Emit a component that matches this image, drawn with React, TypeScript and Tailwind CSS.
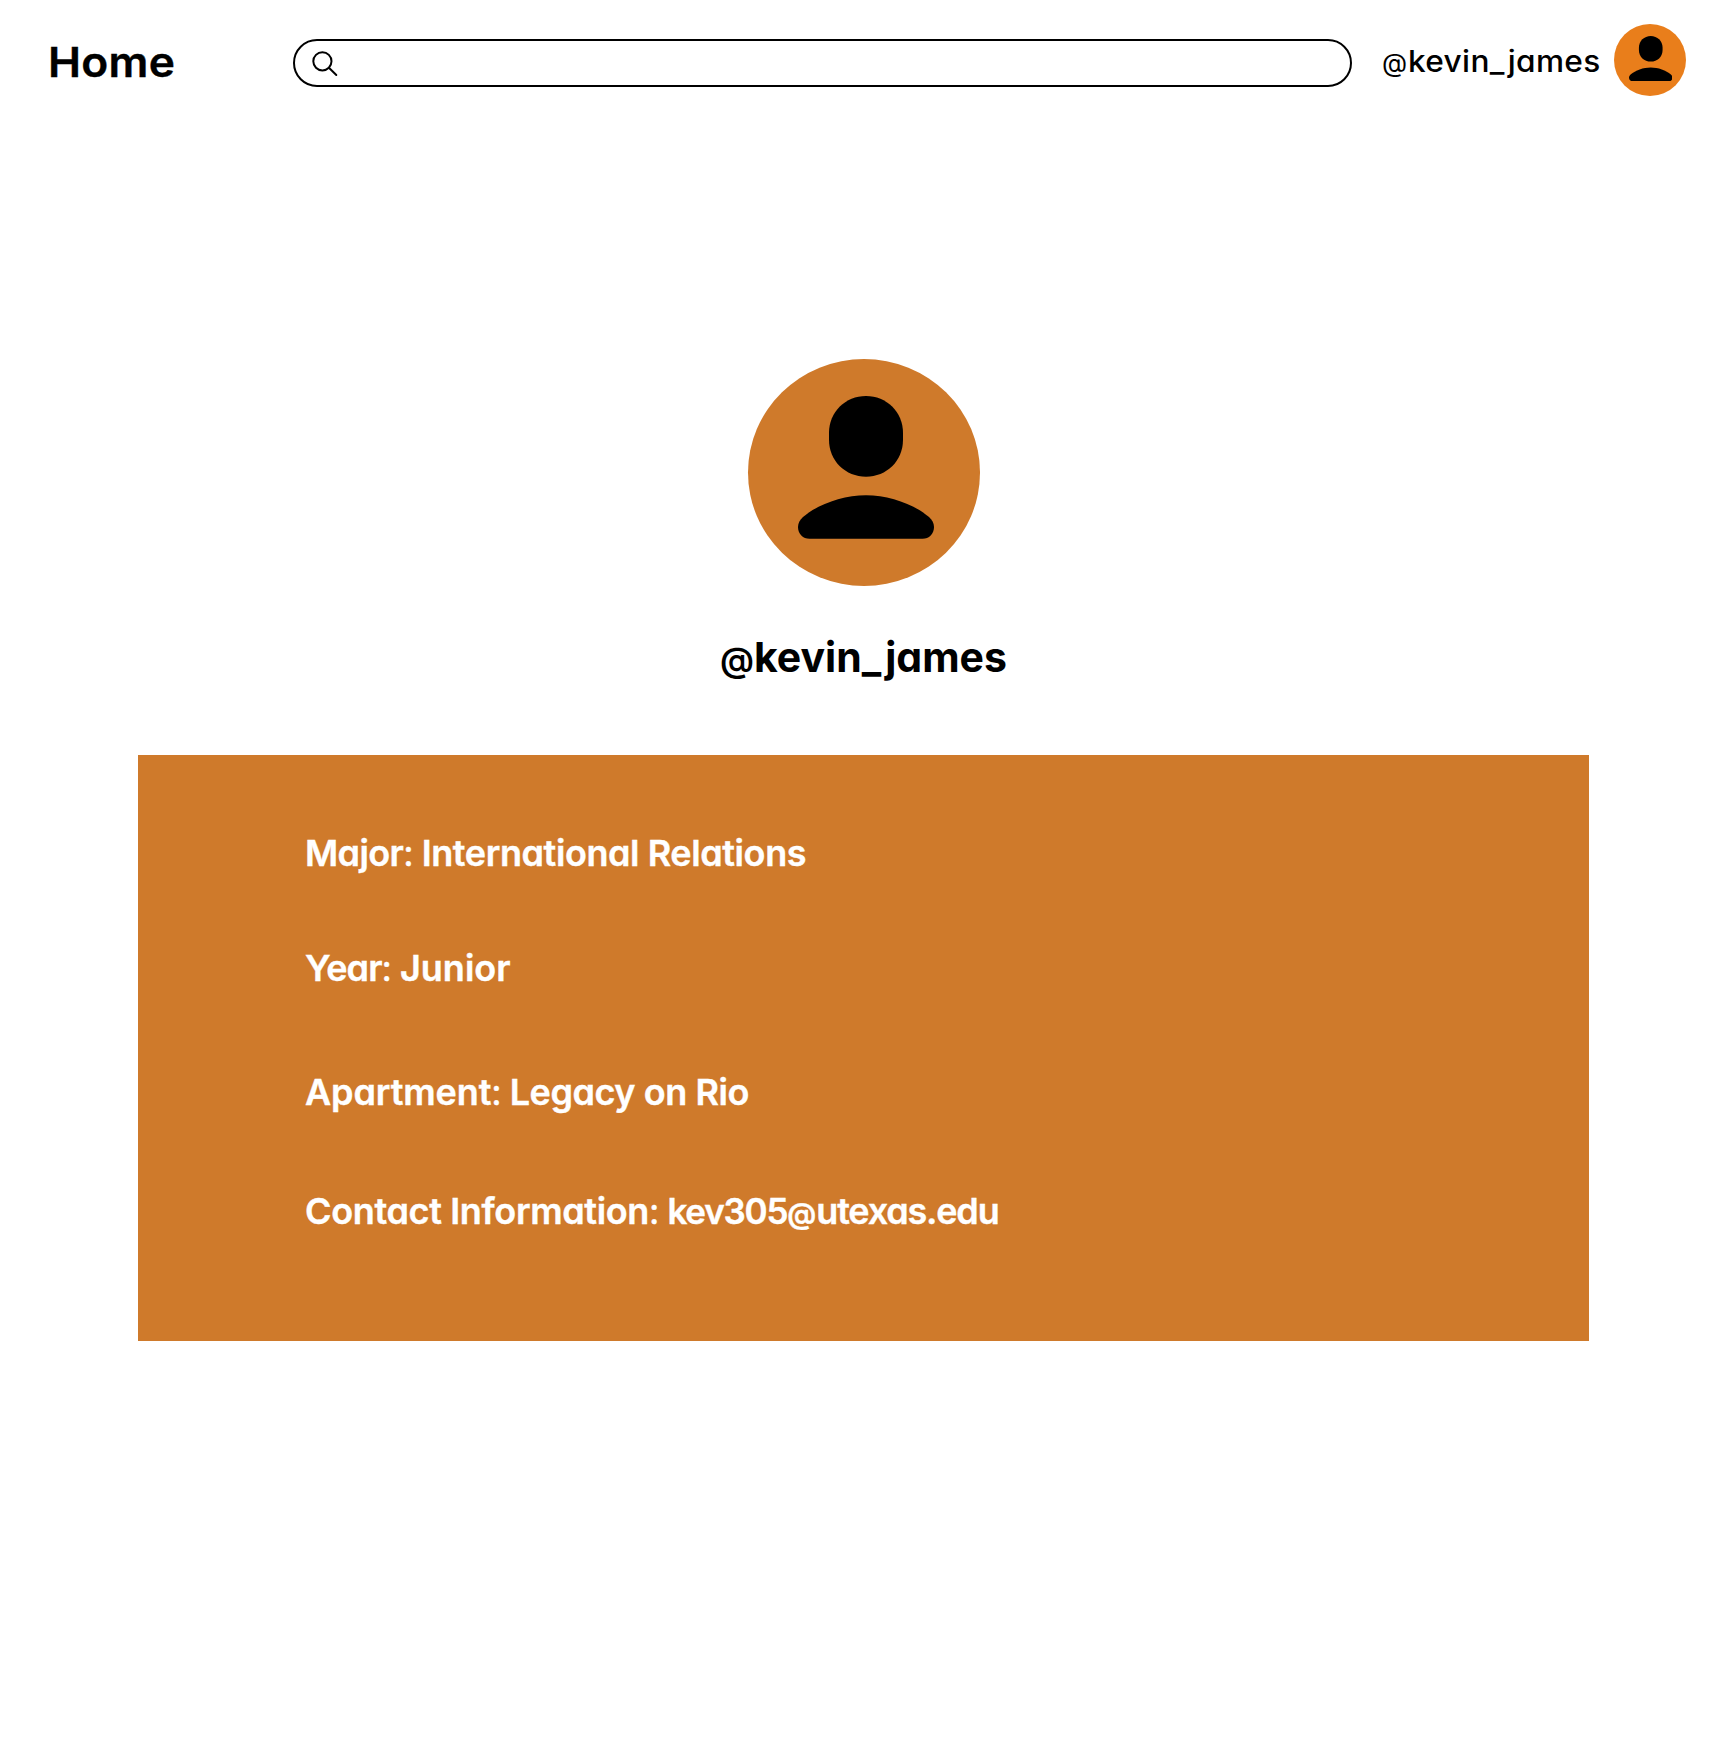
import type { ReactNode } from "react";

function PersonGlyph({ className }: { className: string }) {
  return (
    <svg viewBox="0 0 136 144" preserveAspectRatio="none" className={className} fill="#000" aria-hidden="true">
      <path d="M68 0C88.500 0 105 16 105 37V44C105 65.500 88.500 81 68 81S31 65.500 31 44V37C31 16 47.500 0 68 0Z" />
      <path d="M0 131.500C0 127.500 2 124.500 5 121.500C20 108.500 45 99.500 68 99.500S116 108.500 131 121.500C134 124.500 136 127.500 136 131.500C136 138.500 131 143.300 124.500 143.300H11.500C5 143.300 0 138.500 0 131.500Z" />
    </svg>
  );
}

function SearchBar() {
  return (
    <label className="mt-[6px] ml-[118px] flex h-12 w-[1059px] items-center rounded-full border-2 border-black bg-white pl-[17px]">
      <svg viewBox="0 0 26 26" className="mt-[2px] size-[26px] shrink-0" fill="none" stroke="#000" strokeWidth="2" strokeLinecap="round" aria-hidden="true">
        <circle cx="10.4" cy="10.3" r="9.1" />
        <path d="M17.200 17L24.300 24" />
      </svg>
      <input type="text" aria-label="Search" className="h-full flex-1 bg-transparent px-4 outline-none" />
    </label>
  );
}

function Detail({ label, className, children }: { label: ReactNode; className: string; children: ReactNode }) {
  return (
    <p className={className}>
      {label}
      <span className="mr-2 font-normal tracking-normal">:</span>
      {children}
    </p>
  );
}

export default function App() {
  return (
    <div className="min-h-[1757px] w-[1728px] bg-white font-['Inter',sans-serif] text-black [font-feature-settings:'cv11']">
      <header className="flex h-[120px] items-center pl-12">
        <a className="mt-[4px] w-[127px] origin-left scale-x-[1.08] whitespace-nowrap text-[41px] leading-none font-semibold tracking-[0.3px] [-webkit-text-stroke:0.4px_black]">Home</a>
        <SearchBar />
        <div className="mt-[2px] ml-[30px] flex w-[232px] items-baseline whitespace-nowrap text-[30px] leading-none font-medium">
          <span className="text-[26px] font-normal">@</span>
          <span className="ml-px origin-left scale-x-[1.055] tracking-[0.3px]">kevin_james</span>
        </div>
        <div className="flex size-[72px] shrink-0 justify-center rounded-full bg-[#e97e1b] pt-[11.700px]">
          <PersonGlyph className="ml-px h-[45.500px] w-[43.500px]" />
        </div>
      </header>

      <main className="flex flex-col items-center pr-px">
        <div className="mt-[239px] flex h-[227px] w-[232px] justify-center rounded-[50%] bg-[#cf7a2b] pt-[37px]">
          <PersonGlyph className="ml-[4px] h-[143.500px] w-[136px]" />
        </div>
        <h1 className="mt-[51px] flex h-[41px] items-baseline text-[41px] leading-none font-bold">
          <span className="text-[34px] font-semibold">@</span>kevin_james
        </h1>
        <section className="mt-[77px] h-[586px] w-[1451px] bg-[#cf7a2b] pt-[78px] pl-[167px] text-[36px] font-semibold text-white [-webkit-text-stroke:0.4px_white]">
          <Detail label="Major" className="flex items-baseline leading-10 tracking-[-0.6px]">
            <span className="tracking-[-0.41px]">International Relations</span>
          </Detail>
          <Detail label="Year" className="mt-[75px] flex items-baseline leading-10 tracking-[-0.9px]">
            <span className="tracking-normal">Junior</span>
          </Detail>
          <Detail label="Apartment" className="mt-[84px] flex items-baseline leading-10 tracking-[-0.1px]">
            <span className="tracking-[-0.45px]">Legacy on Rio</span>
          </Detail>
          <Detail label="Contact Information" className="mt-[79px] flex items-baseline leading-10 tracking-[-0.35px]">
            <span className="tracking-[-1.2px]">
              <span className="text-[35px]">kev305</span>
              <span className="text-[29px] tracking-normal">@</span>utexas.edu
            </span>
          </Detail>
        </section>
      </main>
    </div>
  );
}
